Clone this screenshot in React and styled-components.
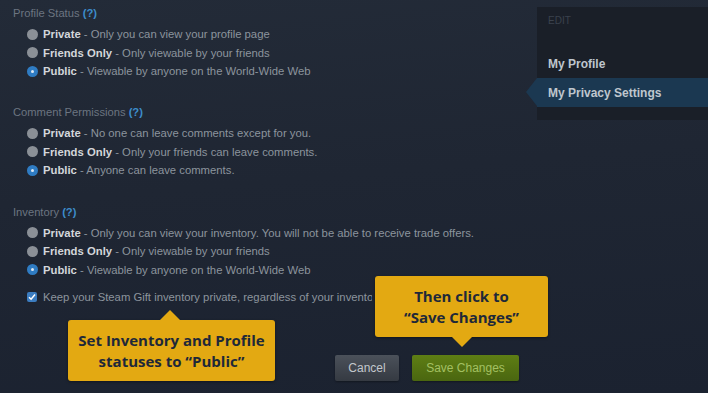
import React from 'react';
import styled, { createGlobalStyle } from 'styled-components';

const GlobalStyle = createGlobalStyle`
  html, body {
    margin: 0;
    padding: 0;
  }
  body {
    background: #1d2431;
    font-family: "Liberation Sans", Arial, sans-serif;
  }
`;

const sections = [
  {
    title: 'Profile Status',
    options: [
      { label: 'Private', desc: 'Only you can view your profile page' },
      { label: 'Friends Only', desc: 'Only viewable by your friends' },
      { label: 'Public', desc: 'Viewable by anyone on the World-Wide Web', checked: true },
    ],
  },
  {
    title: 'Comment Permissions',
    options: [
      { label: 'Private', desc: 'No one can leave comments except for you.' },
      { label: 'Friends Only', desc: 'Only your friends can leave comments.' },
      { label: 'Public', desc: 'Anyone can leave comments.', checked: true },
    ],
  },
  {
    title: 'Inventory',
    options: [
      { label: 'Private', desc: 'Only you can view your inventory. You will not be able to receive trade offers.' },
      { label: 'Friends Only', desc: 'Only viewable by your friends' },
      { label: 'Public', desc: 'Viewable by anyone on the World-Wide Web', checked: true },
    ],
  },
];

const App = () => {
  return (
    <>
      <GlobalStyle />
      <Page>
        <Main>
          {sections.map((section, i) => (
            <Section key={section.title} last={i === sections.length - 1}>
              <Heading>
                {section.title} <Help>(?)</Help>
              </Heading>
              <OptionList>
                {section.options.map((opt) => (
                  <Option key={opt.label}>
                    <Radio checked={opt.checked} />
                    <Label>{opt.label}</Label>
                    <Desc>&nbsp;- {opt.desc}</Desc>
                  </Option>
                ))}
              </OptionList>
            </Section>
          ))}
          <CheckRow>
            <Checkbox>
              <svg width="8" height="8" viewBox="0 0 8 8">
                <path d="M1 4.2 L3.1 6.2 L7 1.6" fill="none" stroke="#fff" strokeWidth="1.5" />
              </svg>
            </Checkbox>
            {/* the tooltip covers the rest of this line in the screenshot */}
            <ClippedDesc>Keep your Steam Gift inventory private, regardless of your inventory privacy setting.</ClippedDesc>
          </CheckRow>
          <ButtonRow>
            <CancelButton>Cancel</CancelButton>
            <SaveButton>Save Changes</SaveButton>
          </ButtonRow>
        </Main>
        <Sidebar>
          <SideTitle>EDIT</SideTitle>
          <SideLink>My Profile</SideLink>
          <SideLink active>My Privacy Settings</SideLink>
        </Sidebar>

        <Callout left={68} top={320} width={207} arrow="up" arrowX={102}>
          Set Inventory and Profile
          <br />
          statuses to “Public”
        </Callout>
        <Callout left={375} top={276} width={173} arrow="down" arrowX={87}>
          Then click to
          <br />
          “Save Changes”
        </Callout>
      </Page>
    </>
  );
};

const Page = styled.div`
  position: relative;
  display: flex;
  height: 393px;
  overflow: hidden;
  background: linear-gradient(175deg, #232b38 0%, #1f2633 45%, #1b2230 100%);
`;

const Main = styled.div`
  flex: 1;
  display: flex;
  flex-direction: column;
  padding: 6px 18px 0 13px;
  min-width: 0;
`;

const Section = styled.div`
  margin-bottom: ${(p) => (p.last ? '8.5px' : '25px')};
`;

const Heading = styled.div`
  font-size: 11.2px;
  line-height: 14px;
  color: #6c7581;
`;

const Help = styled.span`
  color: #3d8dcb;
  font-weight: bold;
`;

const OptionList = styled.div`
  margin-top: 4.75px;
  padding-left: 14px;
`;

const Option = styled.div`
  display: flex;
  align-items: center;
  height: 18.5px;
  font-size: 11.3px;
  white-space: nowrap;
`;

const Radio = styled.span`
  flex: none;
  width: 11px;
  height: 11px;
  border-radius: 50%;
  margin-right: 5px;
  background: ${(p) => (p.checked ? '#2f7cc3' : '#8b9097')};
  position: relative;
  &::after {
    content: '';
    display: ${(p) => (p.checked ? 'block' : 'none')};
    position: absolute;
    left: 4px;
    top: 4px;
    width: 3px;
    height: 3px;
    border-radius: 50%;
    background: #dfe8f2;
  }
`;

const Label = styled.span`
  color: #d3d6da;
  font-weight: bold;
`;

const Desc = styled.span`
  color: #8c949d;
`;

const ClippedDesc = styled(Desc)`
  width: 329px;
  overflow: hidden;
`;

const CheckRow = styled.div`
  display: flex;
  align-items: center;
  height: 18.5px;
  padding-left: 14px;
  font-size: 11.3px;
  white-space: nowrap;
`;

const Checkbox = styled.span`
  flex: none;
  width: 10px;
  height: 10px;
  border-radius: 2px;
  background: #3b7cc0;
  margin-right: 6px;
  display: flex;
  align-items: center;
  justify-content: center;
`;

const ButtonRow = styled.div`
  display: flex;
  justify-content: flex-end;
  gap: 13px;
  margin-top: 49px;
`;

const BaseButton = styled.div`
  height: 26px;
  display: flex;
  align-items: center;
  justify-content: center;
  border-radius: 2px;
  font-size: 12px;
  box-shadow: 0 1px 2px rgba(0, 0, 0, 0.35);
`;

const CancelButton = styled(BaseButton)`
  width: 64px;
  background: linear-gradient(to bottom, #4b515a 0%, #353a42 100%);
  color: #c3c7cc;
`;

const SaveButton = styled(BaseButton)`
  width: 107px;
  background: linear-gradient(to bottom, #5e7e14 0%, #4a6610 100%);
  color: #a3c062;
`;

const Sidebar = styled.div`
  flex: none;
  align-self: flex-start;
  width: 171px;
  height: 113px;
  margin-top: 7px;
  padding-top: 7px;
  box-sizing: border-box;
  background: #1a1f28;
`;

const SideTitle = styled.div`
  padding-left: 11px;
  font-size: 10px;
  line-height: 13px;
  color: #3b424d;
  margin-bottom: 22px;
`;

const SideLink = styled.div`
  position: relative;
  height: 29px;
  display: flex;
  align-items: center;
  padding-left: 11px;
  font-size: 12px;
  font-weight: bold;
  color: #bfc6ce;
  background: ${(p) => (p.active ? '#1b3851' : 'transparent')};
  &::before {
    content: '';
    display: ${(p) => (p.active ? 'block' : 'none')};
    position: absolute;
    left: -11px;
    top: 0;
    border-right: 11px solid #1b3851;
    border-top: 14.5px solid transparent;
    border-bottom: 14.5px solid transparent;
  }
`;

const Callout = styled.div`
  position: absolute;
  left: ${(p) => p.left}px;
  top: ${(p) => p.top}px;
  width: ${(p) => p.width}px;
  height: 61px;
  box-sizing: border-box;
  display: flex;
  align-items: center;
  justify-content: center;
  text-align: center;
  background: #e3a912;
  border-radius: 3px;
  box-shadow: 0 1px 3px rgba(0, 0, 0, 0.4);
  font-family: "Open Sans", "Liberation Sans", sans-serif;
  font-weight: bold;
  font-size: 15px;
  line-height: 21px;
  color: #1e2839;
  &::after {
    content: '';
    position: absolute;
    left: ${(p) => p.arrowX - 10}px;
    ${(p) => (p.arrow === 'up' ? 'top: -10px;' : 'bottom: -10px;')}
    border-left: 10px solid transparent;
    border-right: 10px solid transparent;
    ${(p) =>
      p.arrow === 'up'
        ? 'border-bottom: 10px solid #e3a912;'
        : 'border-top: 10px solid #e3a912;'}
  }
`;

export default App;
